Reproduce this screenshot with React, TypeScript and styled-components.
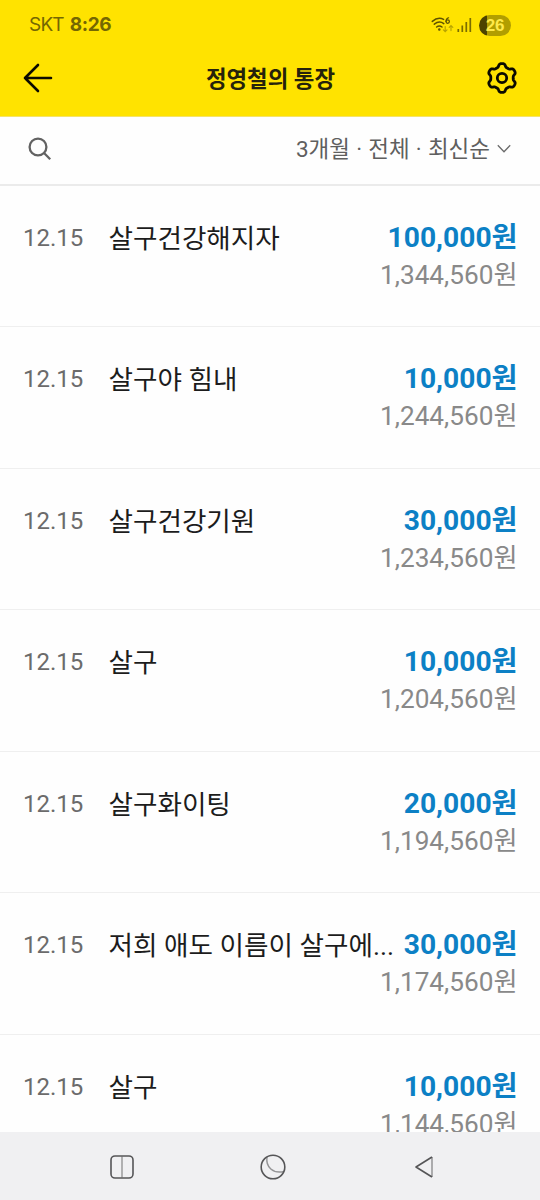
import React from "react";
import styled, { createGlobalStyle } from "styled-components";

const GlobalStyle = createGlobalStyle`
  * { box-sizing: border-box; }
  body {
    margin: 0;
    background: #fefefe;
    font-family: Roboto, "Noto Sans CJK KR", sans-serif;
  }
`;

const Screen = styled.div`
  width: 540px;
  height: 1200px;
  display: flex;
  flex-direction: column;
  overflow: hidden;
  background: #fefefe;
`;

const Header = styled.header`
  flex: none;
  height: 117px;
  background: #ffe300;
  border-bottom: 1px solid #f5e36a;
`;

const StatusBar = styled.div`
  height: 50px;
  display: flex;
  justify-content: space-between;
  align-items: center;
  padding: 0 29px;
  color: #746702;
  font-family: Inter, sans-serif;
  font-size: 19px;
`;

const Carrier = styled.div`
  display: flex;
  gap: 6px;
  line-height: 24px;
  letter-spacing: -0.8px;
`;

const Clock = styled.span`
  font-weight: 700;
  letter-spacing: -0.4px;
`;

const StatusIcons = styled.div`
  display: flex;
  align-items: center;
`;

const Battery = styled.div`
  width: 32px;
  height: 21px;
  margin-left: 7px;
  border-radius: 11px;
  background: linear-gradient(90deg, #4d4300 0 8px, #b19e00 8px);
  color: #ffe94a;
  font-family: "Liberation Sans", sans-serif;
  font-size: 17px;
  font-weight: 700;
  letter-spacing: -0.3px;
  line-height: 21px;
  text-align: center;
`;

const TitleBar = styled.div`
  height: 56px;
  display: grid;
  grid-template-columns: 1fr auto 1fr;
  align-items: center;
  padding: 0 21px 0 22px;
`;

const Title = styled.h1`
  margin: 0;
  padding-top: 2px;
  color: #25220c;
  font-size: 22.4px;
  font-weight: 700;
  line-height: 32px;
  white-space: nowrap;
`;

const IconButton = styled.button<{ $end?: boolean }>`
  display: flex;
  padding: 0;
  border: 0;
  background: none;
  justify-self: ${(p) => (p.$end ? "end" : "start")};
`;

const FilterBar = styled.div`
  flex: none;
  height: 68.5px;
  display: flex;
  justify-content: space-between;
  align-items: center;
  padding: 0 29px 3.5px 28px;
  border-bottom: 2px solid #ebebeb;
`;

const Filter = styled.div`
  display: flex;
  align-items: center;
  gap: 7px;
  color: #5f5f5f;
  font-size: 22.5px;
  line-height: 32px;
  word-spacing: 0.6px;
  white-space: nowrap;
`;

const List = styled.ul`
  flex: 1;
  min-height: 0;
  margin: 0;
  padding: 0;
  overflow: hidden;
  list-style: none;
`;

const Row = styled.li`
  height: 141.6px;
  display: grid;
  grid-template-columns: 85.5px minmax(0, 1fr) auto;
  padding: 33px 22.5px 0 23px;
  border-bottom: 1px solid #efefef;
`;

const DateText = styled.time`
  color: #6b6b6b;
  font-size: 24px;
  line-height: 38px;
`;

const Name = styled.div`
  overflow: hidden;
  width: 290px;
  color: #1c1c1c;
  font-size: 26.6px;
  line-height: 40px;
  text-overflow: ellipsis;
  white-space: nowrap;
`;

const Amounts = styled.div`
  display: flex;
  flex-direction: column;
  align-items: flex-end;
  white-space: nowrap;
`;

const Amount = styled.strong`
  color: #0c80c5;
  font-size: 28.2px;
  font-weight: 700;
  line-height: 38px;
`;

const Balance = styled.span`
  color: #898989;
  font-size: 26.2px;
  line-height: 36px;
`;

const NavBar = styled.nav`
  flex: none;
  height: 68px;
  display: grid;
  grid-template-columns: repeat(3, 151px);
  justify-content: center;
  align-items: center;
  justify-items: center;
  padding: 2px 0 0 5px;
  background: #f0f0f2;
`;

const gearPath = (() => {
  const points: string[] = [];
  for (let i = 0; i < 144; i++) {
    const angle = (i / 144) * Math.PI * 2;
    const wave = Math.tanh(1.8 * Math.cos(6 * angle)) / Math.tanh(1.8);
    const r = 12.8 + 1.6 * wave;
    points.push(
      `${(17 + r * Math.sin(angle)).toFixed(2)} ${(17 - r * Math.cos(angle)).toFixed(2)}`
    );
  }
  return `M${points.join("L")}Z`;
})();

const BackIcon = () => (
  <svg width="32" height="32" viewBox="0 0 32 32" fill="none" stroke="#0c0b00" strokeWidth="2.6" strokeLinecap="round" strokeLinejoin="round">
    <path d="M16 3 3 16l13 13M3 16h26" />
  </svg>
);

const GearIcon = () => (
  <svg width="34" height="34" viewBox="0 0 34 34" fill="none" stroke="#0c0b00" strokeWidth="2.8" strokeLinejoin="round">
    <path d={gearPath} />
    <circle cx="17" cy="17" r="4.7" />
  </svg>
);

const WifiIcon = () => (
  <svg width="26" height="20" viewBox="0 0 26 20" fill="none" stroke="#5d5200" strokeWidth="1.5" strokeLinecap="round">
    <path d="M1.3 6.4Q7 1.4 12.6 4.4M3.3 9.2Q8.2 5.2 12.8 8.6M5.6 12Q8.4 9.8 11 12" />
    <circle cx="8.3" cy="14.4" r=".5" fill="#5d5200" />
    <path d="M17.6 2.8Q15 3.6 15 6.4" strokeWidth="1.2" />
    <circle cx="16.7" cy="6.6" r="1.7" strokeWidth="1.2" />
    <path d="M14.2 11.6v5m-1.8-1.8 1.8 1.8 1.8-1.8M20 15.6v-5m-1.8 1.8L20 10.6l1.8 1.8" stroke="#b9a500" strokeWidth="1.2" />
  </svg>
);

const SignalIcon = () => (
  <svg width="15" height="16" viewBox="0 0 15 16" fill="none" stroke="#7a6d00" strokeWidth="1.7">
    <path d="M1.3 12v3M5.3 8.5V15M9.3 5v10M13.3 1v14" />
  </svg>
);

const SearchIcon = () => (
  <svg width="24" height="24" viewBox="0 0 24 24" fill="none" stroke="#626262" strokeWidth="2.3">
    <circle cx="10" cy="10" r="8.4" />
    <path d="m15.8 15.8 6.4 6.4" />
  </svg>
);

const ChevronIcon = () => (
  <svg width="14" height="10" viewBox="0 0 14 10" fill="none" stroke="#6b6b6b" strokeWidth="1.3">
    <path d="m.8 1.3 6.2 6.4 6.2-6.4" />
  </svg>
);

const RecentsIcon = () => (
  <svg width="26" height="26" viewBox="0 0 26 26" fill="none" stroke="#555557">
    <path d="M13 2.5v21" stroke="#949496" strokeWidth="1.4" />
    <rect x="2" y="2" width="22" height="22" rx="4" strokeWidth="1.6" />
  </svg>
);

const HomeIcon = () => (
  <svg width="28" height="28" viewBox="0 0 28 28" fill="none" stroke="#555557">
    <path d="M8 4C6.5 14 14 21 25 18.5" stroke="#949496" strokeWidth="1.4" />
    <circle cx="14" cy="14" r="11.8" strokeWidth="1.6" />
  </svg>
);

const NavBackIcon = () => (
  <svg width="22" height="24" viewBox="0 0 22 24" fill="none" strokeLinejoin="round">
    <path d="M19 2v20" stroke="#949496" strokeWidth="1.5" />
    <path d="M19 2 3 12l16 10" stroke="#555557" strokeWidth="1.6" />
  </svg>
);

const transactions = [
  { name: "살구건강해지자", amount: "100,000원", balance: "1,344,560원" },
  { name: "살구야 힘내", amount: "10,000원", balance: "1,244,560원" },
  { name: "살구건강기원", amount: "30,000원", balance: "1,234,560원" },
  { name: "살구", amount: "10,000원", balance: "1,204,560원" },
  { name: "살구화이팅", amount: "20,000원", balance: "1,194,560원" },
  { name: "저희 애도 이름이 살구에...", amount: "30,000원", balance: "1,174,560원" },
  { name: "살구", amount: "10,000원", balance: "1,144,560원" },
];

export default function App() {
  return (
    <Screen>
      <GlobalStyle />
      <Header>
        <StatusBar>
          <Carrier>
            <span>SKT</span>
            <Clock>8:26</Clock>
          </Carrier>
          <StatusIcons>
            <WifiIcon />
            <SignalIcon />
            <Battery>26</Battery>
          </StatusIcons>
        </StatusBar>
        <TitleBar>
          <IconButton aria-label="뒤로"><BackIcon /></IconButton>
          <Title>정영철의 통장</Title>
          <IconButton $end aria-label="설정"><GearIcon /></IconButton>
        </TitleBar>
      </Header>
      <FilterBar>
        <IconButton aria-label="검색"><SearchIcon /></IconButton>
        <Filter>
          <span>3개월 · 전체 · 최신순</span>
          <ChevronIcon />
        </Filter>
      </FilterBar>
      <List>
        {transactions.map((item) => (
          <Row key={item.balance}>
            <DateText>12.15</DateText>
            <Name>{item.name}</Name>
            <Amounts>
              <Amount>{item.amount}</Amount>
              <Balance>{item.balance}</Balance>
            </Amounts>
          </Row>
        ))}
      </List>
      <NavBar>
        <RecentsIcon />
        <HomeIcon />
        <NavBackIcon />
      </NavBar>
    </Screen>
  );
}
